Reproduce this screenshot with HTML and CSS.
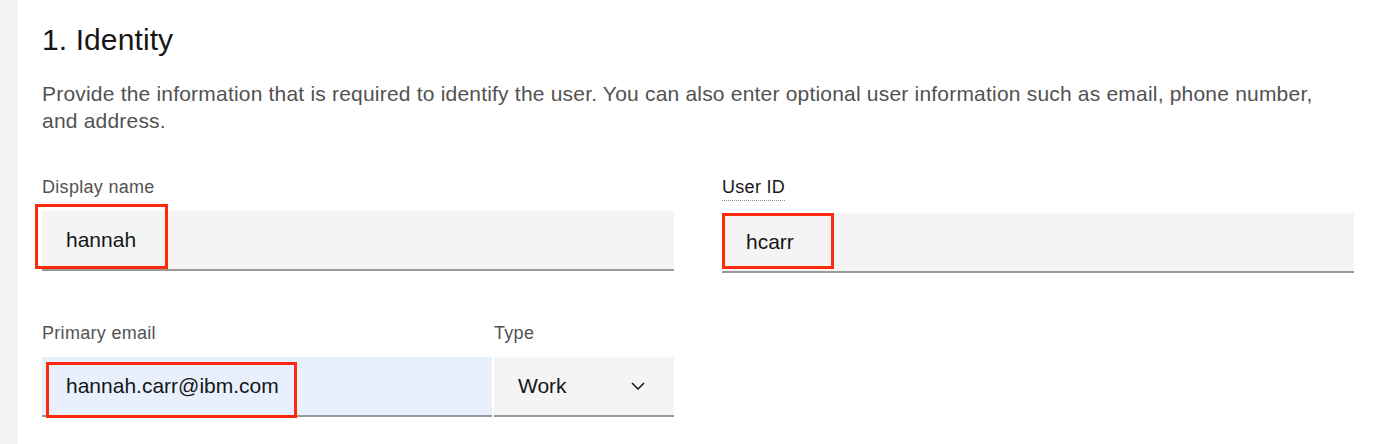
FILE: index.html
```html
<!DOCTYPE html>
<html lang="en">
<head>
<meta charset="utf-8">
<title>Identity</title>
<link rel="stylesheet" href="styles.css">
</head>
<body>
<div class="page">
  <aside class="rail"></aside>
  <main class="content">
    <h2 class="title">1. Identity</h2>
    <p class="intro">Provide the information that is required to identify the user. You can also enter optional user information such as email, phone number, and address.</p>
    <div class="form-grid">
      <div class="field">
        <label class="label">Display name</label>
        <div class="input-wrap">
          <div class="input">hannah</div>
          <span class="mark mark-name"></span>
        </div>
      </div>
      <div class="field">
        <label class="label label-tip">User ID</label>
        <div class="input-wrap">
          <div class="input">hcarr</div>
          <span class="mark mark-id"></span>
        </div>
      </div>
      <div class="field-group">
        <div class="field field-email">
          <label class="label">Primary email</label>
          <div class="input-wrap">
            <div class="input input-autofill">hannah.carr@ibm.com</div>
            <span class="mark mark-email"></span>
          </div>
        </div>
        <div class="field field-type">
          <label class="label">Type</label>
          <div class="select">
            <span>Work</span>
            <svg class="chevron" width="14" height="8" viewBox="0 0 14 8"><polyline points="1,1 7,7 13,1" fill="none" stroke="#161616" stroke-width="1.5"/></svg>
          </div>
        </div>
      </div>
    </div>
  </main>
</div>
</body>
</html>
```

FILE: styles.css
```css
* { box-sizing: border-box; }
html, body { margin: 0; padding: 0; background: #ffffff; }
body { font-family: "Liberation Sans", Arial, Helvetica, sans-serif; color: #161616; }

.page { display: flex; width: 1374px; height: 444px; overflow: hidden; }
.rail { width: 18px; flex: none; background: #f4f4f4; }
.content { flex: 1; padding: 22px 20px 0 24px; }

.title { margin: 0; font-size: 30px; line-height: 36px; font-weight: 400; color: #161616; letter-spacing: 0.1px; }
.intro { margin: 22px 0 0; font-size: 21px; line-height: 27px; color: #525252; letter-spacing: 0.2px; }

.form-grid {
  margin-top: 41px;
  display: grid;
  grid-template-columns: 632px 632px;
  column-gap: 48px;
  row-gap: 48px;
  align-items: start;
}

.field { display: flex; flex-direction: column; align-items: flex-start; }
.label { display: inline-block; font-size: 18px; line-height: 24px; color: #525252; margin-bottom: 12px; letter-spacing: 0.3px; }
.label-tip { color: #161616; border-bottom: 1px dotted #8d8d8d; line-height: 25px; }

.input-wrap { position: relative; width: 100%; }
.input {
  height: 60px;
  padding: 0 24px;
  display: flex;
  align-items: center;
  background: #f4f4f4;
  border-bottom: 2px solid #999999;
  font-size: 21px;
  color: #161616;
}
.input-autofill { background: #e8f0fe; }

.field-group { display: flex; gap: 2px; }
.field-email { width: 450px; }
.field-type { width: 180px; }

.select {
  width: 100%;
  height: 60px;
  padding: 0 29px 0 24px;
  display: flex;
  align-items: center;
  justify-content: space-between;
  background: #f4f4f4;
  border-bottom: 2px solid #999999;
  font-size: 21px;
  color: #161616;
}
.chevron { display: block; }

.mark { position: absolute; border: 3px solid #fa2a0a; pointer-events: none; }
.mark-name { left: -7px; top: -7px; width: 133px; height: 65px; }
.mark-id { left: 0; top: 0; width: 112px; height: 56px; }
.mark-email { left: 4px; top: 5px; width: 251px; height: 56px; }
```
